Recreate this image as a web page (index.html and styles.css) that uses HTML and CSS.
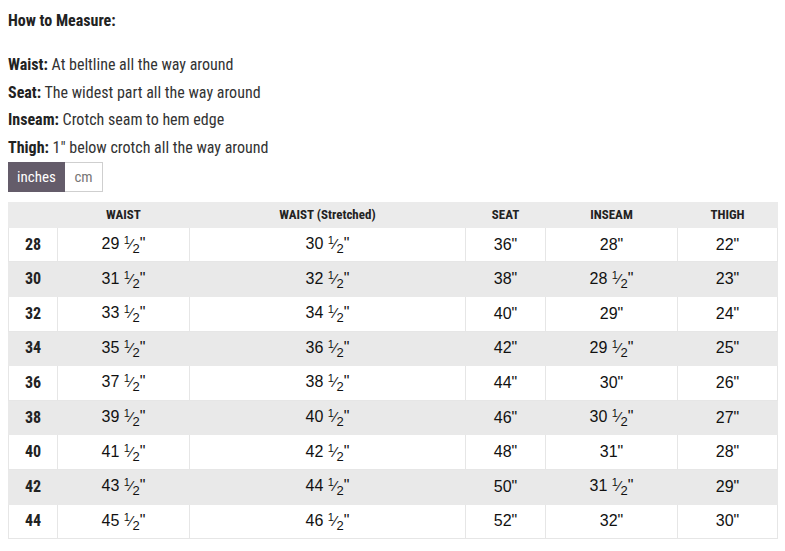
FILE: index.html
```html
<!DOCTYPE html>
<html>
<head>
<meta charset="utf-8">
<link rel="stylesheet" href="styles.css">
</head>
<body>
<div class="page">
  <h3 class="title">How to Measure:</h3>
  <div class="guide">
    <p><b>Waist:</b> At beltline all the way around</p>
    <p><b>Seat:</b> The widest part all the way around</p>
    <p><b>Inseam:</b> Crotch seam to hem edge</p>
    <p><b>Thigh:</b> 1" below crotch all the way around</p>
  </div>
  <div class="units">
    <span class="unit active">inches</span><span class="unit">cm</span>
  </div>
  <table class="sizes">
    <colgroup>
      <col class="c1"><col class="c2"><col class="c3"><col class="c4"><col class="c5"><col class="c6">
    </colgroup>
    <thead>
      <tr><th></th><th>WAIST</th><th>WAIST (Stretched)</th><th>SEAT</th><th>INSEAM</th><th>THIGH</th></tr>
    </thead>
    <tbody>
      <tr><td class="sz">28</td><td>29 <span class="fr"><span class="n">1</span><span class="s">⁄</span><span class="d">2</span></span>"</td><td>30 <span class="fr"><span class="n">1</span><span class="s">⁄</span><span class="d">2</span></span>"</td><td>36"</td><td>28"</td><td>22"</td></tr>
      <tr><td class="sz">30</td><td>31 <span class="fr"><span class="n">1</span><span class="s">⁄</span><span class="d">2</span></span>"</td><td>32 <span class="fr"><span class="n">1</span><span class="s">⁄</span><span class="d">2</span></span>"</td><td>38"</td><td>28 <span class="fr"><span class="n">1</span><span class="s">⁄</span><span class="d">2</span></span>"</td><td>23"</td></tr>
      <tr><td class="sz">32</td><td>33 <span class="fr"><span class="n">1</span><span class="s">⁄</span><span class="d">2</span></span>"</td><td>34 <span class="fr"><span class="n">1</span><span class="s">⁄</span><span class="d">2</span></span>"</td><td>40"</td><td>29"</td><td>24"</td></tr>
      <tr><td class="sz">34</td><td>35 <span class="fr"><span class="n">1</span><span class="s">⁄</span><span class="d">2</span></span>"</td><td>36 <span class="fr"><span class="n">1</span><span class="s">⁄</span><span class="d">2</span></span>"</td><td>42"</td><td>29 <span class="fr"><span class="n">1</span><span class="s">⁄</span><span class="d">2</span></span>"</td><td>25"</td></tr>
      <tr><td class="sz">36</td><td>37 <span class="fr"><span class="n">1</span><span class="s">⁄</span><span class="d">2</span></span>"</td><td>38 <span class="fr"><span class="n">1</span><span class="s">⁄</span><span class="d">2</span></span>"</td><td>44"</td><td>30"</td><td>26"</td></tr>
      <tr><td class="sz">38</td><td>39 <span class="fr"><span class="n">1</span><span class="s">⁄</span><span class="d">2</span></span>"</td><td>40 <span class="fr"><span class="n">1</span><span class="s">⁄</span><span class="d">2</span></span>"</td><td>46"</td><td>30 <span class="fr"><span class="n">1</span><span class="s">⁄</span><span class="d">2</span></span>"</td><td>27"</td></tr>
      <tr><td class="sz">40</td><td>41 <span class="fr"><span class="n">1</span><span class="s">⁄</span><span class="d">2</span></span>"</td><td>42 <span class="fr"><span class="n">1</span><span class="s">⁄</span><span class="d">2</span></span>"</td><td>48"</td><td>31"</td><td>28"</td></tr>
      <tr><td class="sz">42</td><td>43 <span class="fr"><span class="n">1</span><span class="s">⁄</span><span class="d">2</span></span>"</td><td>44 <span class="fr"><span class="n">1</span><span class="s">⁄</span><span class="d">2</span></span>"</td><td>50"</td><td>31 <span class="fr"><span class="n">1</span><span class="s">⁄</span><span class="d">2</span></span>"</td><td>29"</td></tr>
      <tr><td class="sz">44</td><td>45 <span class="fr"><span class="n">1</span><span class="s">⁄</span><span class="d">2</span></span>"</td><td>46 <span class="fr"><span class="n">1</span><span class="s">⁄</span><span class="d">2</span></span>"</td><td>52"</td><td>32"</td><td>30"</td></tr>
    </tbody>
  </table>
</div>
</body>
</html>
```
FILE: styles.css
```css
html, body {
  margin: 0;
  padding: 0;
  background: #fff;
}
.page {
  padding: 10px 8px 0 8px;
  font-family: "Roboto Condensed", "Liberation Sans Narrow", Roboto, sans-serif;
  color: #222;
}
.title {
  margin: 0;
  font-size: 16px;
  font-weight: 700;
  line-height: 22px;
  color: #222;
}
.guide {
  margin-top: 19px;
}
.guide p {
  margin: 0;
  font-size: 16px;
  line-height: 27.7px;
  color: #333;
}
.guide b {
  color: #222;
}
.units {
  display: flex;
  margin-top: 0;
  height: 30px;
}
.unit {
  display: flex;
  align-items: center;
  justify-content: center;
  font-size: 15px;
  color: #777;
  border: 1px solid #cfcfcf;
  border-left: none;
  width: 38px;
  box-sizing: border-box;
  background: #fff;
}
.unit.active {
  background: #645c6a;
  color: #fff;
  border: none;
  width: 57px;
}
.sizes {
  margin-top: 10px;
  width: 769px;
  border-collapse: collapse;
  table-layout: fixed;
}
.c1 { width: 49px; }
.c2 { width: 132px; }
.c3 { width: 276px; }
.c4 { width: 80px; }
.c5 { width: 132px; }
.c6 { width: 100px; }
.sizes th {
  background: #ebebeb;
  height: 24px;
  padding: 0;
  font-size: 13px;
  font-weight: 700;
  color: #222;
  text-align: center;
  border: 1px solid #ebebeb;
}
.sizes td {
  height: 33.6px;
  padding: 0;
  text-align: center;
  font-family: "Liberation Sans", Arial, sans-serif;
  font-size: 16px;
  line-height: 20px;
  color: #111;
  border: 1px solid #e6e6e6;
}
.sizes td.sz {
  font-family: "Roboto Condensed", "Liberation Sans Narrow", Roboto, sans-serif;
  font-weight: 700;
  font-size: 16px;
  color: #222;
}
.sizes tbody tr:nth-child(even) td {
  background: #e9e9e9;
  border-color: #e9e9e9;
}
.fr {
  white-space: nowrap;
  line-height: 1;
}
.fr .n {
  font-size: 11px;
  vertical-align: 5px;
  line-height: 1;
}
.fr .s {
  font-size: 15px;
  line-height: 1;
}
.fr .d {
  font-size: 13px;
  vertical-align: -4px;
  line-height: 1;
}
```
